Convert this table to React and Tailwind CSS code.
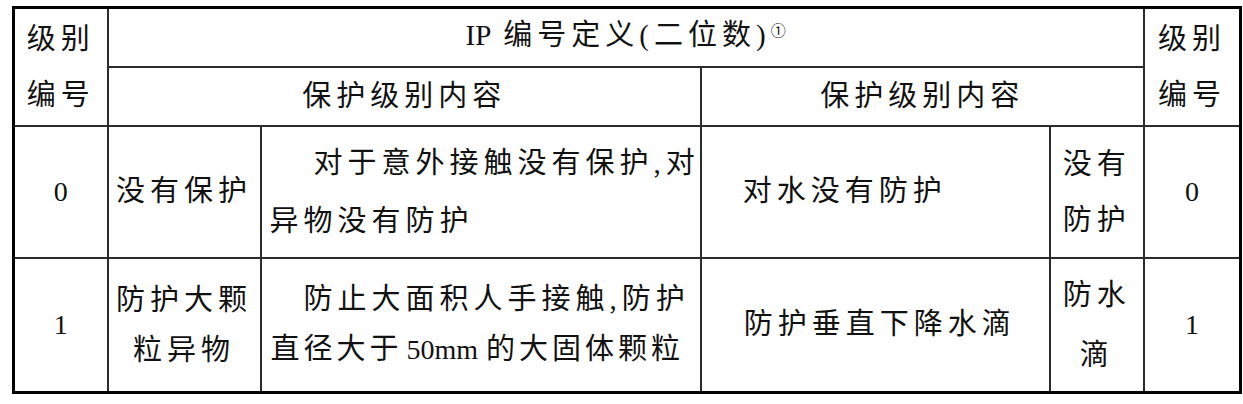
export default function App() {
  const cell = 'border-2 border-[#2b2b2b] align-middle p-0';
  return (
    <div className="min-h-[404px] w-[1243px] bg-white pl-[12px] pt-[6px] text-[#111] text-[29px] tracking-[5px] [font-family:'Liberation_Serif','Noto_Sans_CJK_SC',serif]">
      <table className="table-fixed border-collapse border-[3px] border-black text-center">
        <colgroup>
          <col className="w-[94px]" />
          <col className="w-[153px]" />
          <col className="w-[437px]" />
          <col className="w-[349px]" />
          <col className="w-[94px]" />
          <col className="w-[97px]" />
        </colgroup>
        <tbody>
          <tr className="h-[59px]">
            <td rowSpan={2} className={`${cell} leading-[56px]`}>
              <div>级别</div>
              <div>编号</div>
            </td>
            <td colSpan={4} className={`${cell} whitespace-nowrap leading-[40px]`}>
              <span className="mr-[12px] tracking-normal">IP</span>编号定义(二位数)
              <span className="relative -top-[9px] text-[15px] tracking-normal">①</span>
            </td>
            <td rowSpan={2} className={`${cell} leading-[56px]`}>
              <div>级别</div>
              <div>编号</div>
            </td>
          </tr>
          <tr className="h-[59px]">
            <td colSpan={2} className={`${cell} leading-[40px]`}>保护级别内容</td>
            <td colSpan={2} className={`${cell} leading-[40px]`}>保护级别内容</td>
          </tr>
          <tr className="h-[132px]">
            <td className={`${cell} tracking-normal text-[28px]`}>0</td>
            <td className={`${cell} whitespace-nowrap`}>没有保护</td>
            <td className={`${cell} whitespace-nowrap pl-[8px] text-left leading-[58px]`}>
              <div className="pl-[44px]">对于意外接触没有保护,对</div>
              <div>异物没有防护</div>
            </td>
            <td className={`${cell} whitespace-nowrap pl-[41px] text-left`}>对水没有防护</td>
            <td className={`${cell} leading-[56px]`}>
              <div>没有</div>
              <div>防护</div>
            </td>
            <td className={`${cell} tracking-normal text-[28px]`}>0</td>
          </tr>
          <tr className="h-[135px]">
            <td className={`${cell} tracking-normal text-[28px]`}>1</td>
            <td className={`${cell} whitespace-nowrap leading-[50px]`}>
              <div>防护大颗</div>
              <div>粒异物</div>
            </td>
            <td className={`${cell} whitespace-nowrap pl-[9px] text-left leading-[50px]`}>
              <div className="pl-[33px]">防止大面积人手接触,防护</div>
              <div className="tracking-[4px]">
                直径大于<span className="ml-[4px] mr-[8px] text-[28px] tracking-normal">50mm</span>的大固体颗粒
              </div>
            </td>
            <td className={`${cell} whitespace-nowrap pl-[42px] text-left`}>防护垂直下降水滴</td>
            <td className={`${cell} leading-[60px]`}>
              <div>防水</div>
              <div>滴</div>
            </td>
            <td className={`${cell} tracking-normal text-[28px]`}>1</td>
          </tr>
        </tbody>
      </table>
    </div>
  );
}
